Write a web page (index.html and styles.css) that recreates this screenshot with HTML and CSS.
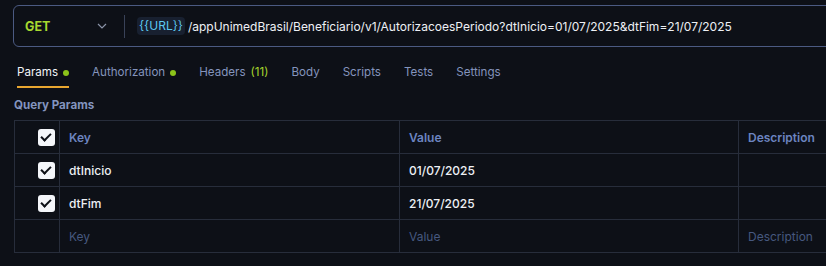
FILE: index.html
```html
<!DOCTYPE html>
<html lang="en">
<head>
    <meta charset="UTF-8">
    <title>Request</title>
    <link rel="stylesheet" href="styles.css">
</head>
<body>
    <div class="url-bar">
        <div class="method">
            <span class="method-name">GET</span>
            <svg class="chevron" width="10" height="6" viewBox="0 0 10 6"><path d="M1 1l4 4 4-4" fill="none" stroke="#8a93a8" stroke-width="1.2"/></svg>
        </div>
        <div class="divider"></div>
        <div class="url">
            <span class="var">{{URL}}</span>
            <span class="path">/appUnimedBrasil/Beneficiario/v1/AutorizacoesPeriodo?dtInicio=01/07/2025&amp;dtFim=21/07/2025</span>
        </div>
    </div>

    <nav class="tabs">
        <div class="tab active">Params <span class="dot"></span></div>
        <div class="tab">Authorization <span class="dot"></span></div>
        <div class="tab headers">Headers <span class="count">(11)</span></div>
        <div class="tab">Body</div>
        <div class="tab">Scripts</div>
        <div class="tab">Tests</div>
        <div class="tab">Settings</div>
    </nav>

    <div class="section-title">Query Params</div>

    <div class="params">
        <div class="row head">
            <div class="cell check"><span class="box"></span></div>
            <div class="cell key">Key</div>
            <div class="cell value">Value</div>
            <div class="cell desc">Description</div>
        </div>
        <div class="row">
            <div class="cell check"><span class="box"></span></div>
            <div class="cell key">dtInicio</div>
            <div class="cell value">01/07/2025</div>
            <div class="cell desc"></div>
        </div>
        <div class="row">
            <div class="cell check"><span class="box"></span></div>
            <div class="cell key">dtFim</div>
            <div class="cell value">21/07/2025</div>
            <div class="cell desc"></div>
        </div>
        <div class="row empty">
            <div class="cell check"></div>
            <div class="cell key">Key</div>
            <div class="cell value">Value</div>
            <div class="cell desc">Description</div>
        </div>
    </div>
</body>
</html>
```

FILE: styles.css
```css
* {
    margin: 0;
    padding: 0;
    box-sizing: border-box;
}

body {
    font-family: 'Inter', 'Liberation Sans', sans-serif;
    background-color: #0d1017;
    color: #e8ebf2;
    font-size: 12px;
    overflow: hidden;
    width: 826px;
    height: 266px;
}

/* URL bar */
.url-bar {
    margin: 5px 0 0 13px;
    width: 900px;
    height: 42px;
    border: 1px solid #4b5a82;
    border-radius: 6px;
    display: flex;
    align-items: center;
}

.method {
    width: 104px;
    display: flex;
    align-items: center;
    justify-content: space-between;
    padding: 0 11px 0 11px;
}

.method-name {
    color: #a7d930;
    font-weight: 700;
    font-size: 12.5px;
}

.divider {
    width: 1px;
    height: 23px;
    background-color: #394258;
    margin: 0 12px 0 6px;
}

.url {
    display: flex;
    align-items: center;
    gap: 3px;
    white-space: nowrap;
}

.var {
    background-color: #182030;
    color: #5cc8f0;
    border-radius: 4px;
    padding: 2px 2px;
    line-height: 14px;
}

.path {
    color: #eef0f5;
}

/* Tabs */
.tabs {
    display: flex;
    gap: 23px;
    padding: 0 0 0 17px;
    margin-top: 15px;
    height: 26px;
    font-size: 11.6px;
}

.tab {
    color: #8494bd;
    display: flex;
    align-items: flex-start;
    gap: 5px;
    padding-top: 3px;
    border-bottom: 2px solid transparent;
    height: 26px;
}

.tab.active {
    color: #f2f4f8;
    border-bottom-color: #e8a630;
}

.dot {
    width: 6px;
    height: 6px;
    border-radius: 50%;
    background-color: #8cc31a;
    margin-top: 5px;
}

.count {
    color: #a6d42c;
}

.section-title {
    color: #8394bf;
    font-weight: 700;
    font-size: 11.6px;
    padding: 10px 0 0 14px;
    height: 32px;
}

/* Params table */
.params {
    margin-left: 14px;
    width: 860px;
    border-top: 1px solid #272d3b;
    border-left: 1px solid #272d3b;
}

.row {
    display: flex;
    height: 33px;
    border-bottom: 1px solid #272d3b;
}

.cell {
    display: flex;
    align-items: center;
    padding-left: 9px;
    border-right: 1px solid #272d3b;
    color: #eef0f5;
    font-weight: 500;
}

.check {
    width: 45px;
    justify-content: flex-end;
    padding: 0 4px 0 0;
}

.key {
    width: 340px;
}

.value {
    width: 339px;
}

.desc {
    flex: 1;
    border-right: none;
}

.head .cell {
    color: #6c84c0;
    font-weight: 600;
}

.empty .cell {
    color: #46587f;
    font-weight: 400;
}

.box {
    width: 17px;
    height: 17px;
    border-radius: 3px;
    background-color: #f4f6fa;
    position: relative;
}

.box::after {
    content: "";
    position: absolute;
    left: 5px;
    top: 2px;
    width: 4px;
    height: 8px;
    border: solid #0d1017;
    border-width: 0 2.5px 2.5px 0;
    transform: rotate(45deg);
}
```
